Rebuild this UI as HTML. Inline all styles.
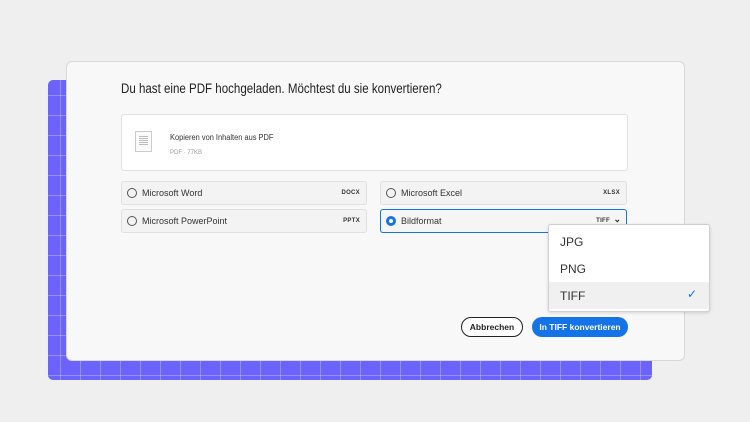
<!DOCTYPE html>
<html><head><style>
*{box-sizing:border-box;margin:0;padding:0}
body{width:750px;height:422px;background:#efefef;font-family:"Liberation Sans",sans-serif;position:relative;overflow:hidden;color:#2c2c2c}
.grid{position:absolute;left:48px;top:80px;width:604px;height:300px;border-radius:5px;background-color:#6b63fb;
background-image:linear-gradient(rgba(255,255,255,.28) 1px,transparent 1px),linear-gradient(90deg,rgba(255,255,255,.28) 1px,transparent 1px);
background-size:20px 20px;background-position:0 15px,12px 0}
.card{position:absolute;left:66px;top:61px;width:619px;height:300px;background:#f8f8f8;border:1px solid #d8d8d8;border-radius:6px}
.abs{position:absolute}
h1{position:absolute;left:121px;top:81px;font-size:13.5px;font-weight:normal;color:#222;transform:scaleX(.855);transform-origin:0 0;white-space:nowrap}
.file{left:121px;top:114px;width:507px;height:57px;background:#fff;border:1px solid #e1e1e1;border-radius:3px}
.opt{position:absolute;height:24px;background:#f3f3f3;border:1px solid #e0e0e0;border-radius:3px;font-size:9px;color:#333}
.opt .r{position:absolute;left:5px;top:6px;width:10px;height:10px;border:1.3px solid #555;border-radius:50%}
.opt .l{position:absolute;left:20px;top:6px}
.opt .t{position:absolute;right:6px;top:8px;font-size:6px;font-weight:bold;letter-spacing:.3px}
.dd{left:548px;top:224px;width:162px;height:88px;background:#fff;border:1px solid #d0d0d0;border-radius:3px;box-shadow:0 1px 3px rgba(0,0,0,.15)}
.dd div{position:absolute;left:11px;font-size:12px;color:#333}
.btn{position:absolute;height:20px;border-radius:10px;font-size:8.5px;font-weight:bold;text-align:center;line-height:18px}
</style></head><body>
<div class="grid"></div>
<div class="card"></div>
<h1>Du hast eine PDF hochgeladen. Möchtest du sie konvertieren?</h1>
<div class="abs file">
 <div class="abs" style="left:13px;top:16px;width:17px;height:21px;border:1px solid #ccc;background:#fafafa">
  <div class="abs" style="left:3px;top:4px;width:9px;height:10px;background:repeating-linear-gradient(#bbb 0 1px,transparent 1px 2px)"></div>
 </div>
 <div class="abs" style="left:48px;top:18px;font-size:8px;color:#333;transform:scaleX(.93);transform-origin:0 0;white-space:nowrap">Kopieren von Inhalten aus PDF</div>
 <div class="abs" style="left:48px;top:35px;font-size:6px;color:#999">PDF · 77KB</div>
</div>
<div class="opt" style="left:121px;top:181px;width:246px"><span class="r"></span><span class="l">Microsoft Word</span><span class="t">DOCX</span></div>
<div class="opt" style="left:121px;top:209px;width:246px"><span class="r"></span><span class="l">Microsoft PowerPoint</span><span class="t">PPTX</span></div>
<div class="opt" style="left:380px;top:181px;width:247px"><span class="r"></span><span class="l">Microsoft Excel</span><span class="t">XLSX</span></div>
<div class="opt" style="left:380px;top:209px;width:247px;border:1.3px solid #1473e6;background:#f5f5f5"><span class="r" style="border:3px solid #1473e6;background:#fff"></span><span class="l">Bildformat</span><span class="t" style="right:16px">TIFF</span><span class="abs" style="right:5px;top:4px;font-size:9px;font-weight:bold">⌄</span></div>
<div class="abs dd">
 <div style="top:10px">JPG</div>
 <div style="top:37px">PNG</div>
 <div style="left:0;top:57px;width:160px;height:27px;background:#f0f0f0"></div>
 <div style="top:64px">TIFF</div>
 <div style="left:138px;top:62px;color:#1473e6;font-size:12px">✓</div>
</div>
<div class="btn" style="left:461px;top:317px;width:62px;border:1.5px solid #222;color:#222;background:#fff">Abbrechen</div>
<div class="btn" style="left:532px;top:317px;width:96px;background:#1473e6;color:#fff;line-height:20px">In TIFF konvertieren</div>
</body></html>
